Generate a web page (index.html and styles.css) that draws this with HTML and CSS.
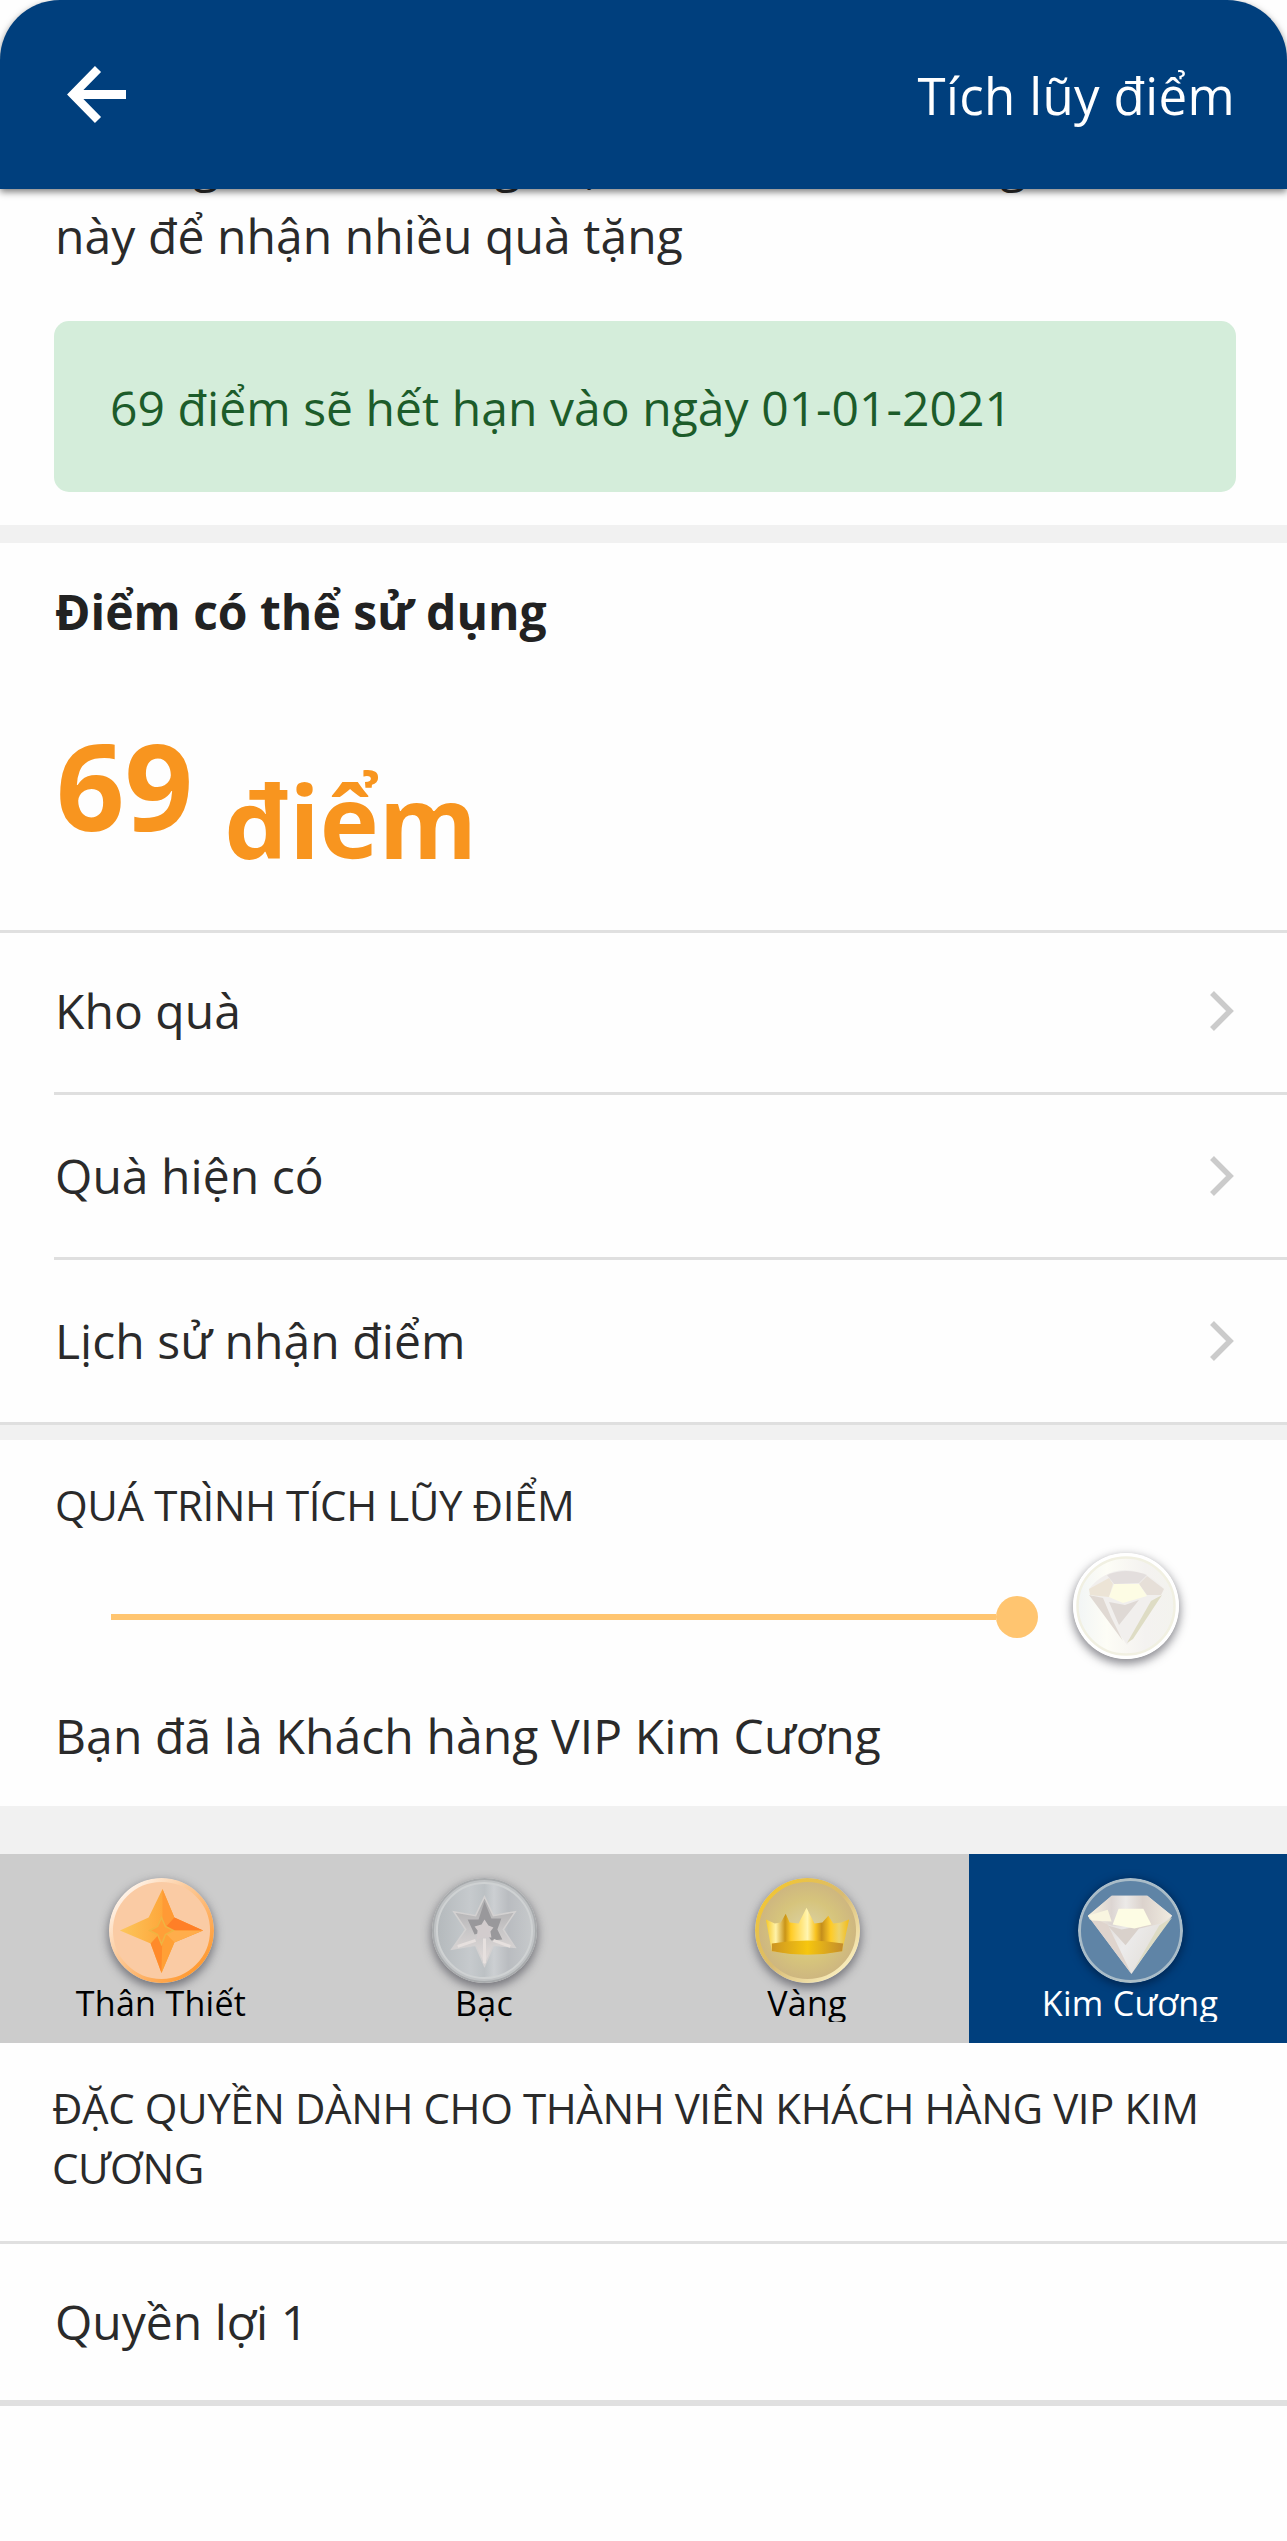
FILE: index.html
```html
<!DOCTYPE html>
<html lang="vi">
<head>
<meta charset="utf-8">
<title>Tích lũy điểm</title>
<link rel="stylesheet" href="styles.css">
</head>
<body>
<svg class="defs" width="0" height="0" aria-hidden="true">
  <defs>
    <linearGradient id="bronze-rim" x1="0" y1="0" x2="1" y2="1">
      <stop offset=".12" stop-color="#fff4ea"/><stop offset=".4" stop-color="#fccb9c"/><stop offset=".85" stop-color="#ff9c36"/>
    </linearGradient>
    <linearGradient id="bronze-left" x1="0" y1="0" x2="1" y2="0">
      <stop offset="0" stop-color="#fcc65c"/><stop offset="1" stop-color="#ff8a1c"/>
    </linearGradient>
    <linearGradient id="silver-face" x1="0" y1="0" x2="1" y2="0">
      <stop offset="0" stop-color="#b4b9bc"/><stop offset=".35" stop-color="#c6cacd"/><stop offset=".5" stop-color="#bcc1c4"/><stop offset=".6" stop-color="#cccfd2"/><stop offset=".75" stop-color="#b9bcc0"/><stop offset="1" stop-color="#c6c9cb"/>
    </linearGradient>
    <linearGradient id="silver-star" x1="0" y1="0" x2="0" y2="1">
      <stop offset="0" stop-color="#a9a9ab"/><stop offset=".5" stop-color="#c9c7c8"/><stop offset="1" stop-color="#e6dfdd"/>
    </linearGradient>
    <radialGradient id="gold-face">
      <stop offset="0" stop-color="#dcd3a8"/><stop offset=".6" stop-color="#d6c47c"/><stop offset="1" stop-color="#cdb580"/>
    </radialGradient>
    <linearGradient id="gold-rim" x1="0" y1="0" x2="1" y2="1">
      <stop offset=".1" stop-color="#f3c631"/><stop offset=".5" stop-color="#d8bb72"/><stop offset=".9" stop-color="#fbf0c0"/>
    </linearGradient>
    <linearGradient id="gold-crown" x1="0" y1="0" x2="1" y2="0">
      <stop offset="0" stop-color="#f6c927"/><stop offset=".12" stop-color="#fff2a8"/><stop offset=".23" stop-color="#c99418"/><stop offset=".3" stop-color="#ffcb25"/><stop offset=".5" stop-color="#fff5b0"/><stop offset=".6" stop-color="#f8c21f"/><stop offset=".67" stop-color="#c48e1c"/><stop offset=".78" stop-color="#ffcb25"/><stop offset=".88" stop-color="#ecd36c"/><stop offset="1" stop-color="#f3bb17"/>
    </linearGradient>
    <linearGradient id="gold-band" x1="0" y1="0" x2="1" y2="0">
      <stop offset="0" stop-color="#cd9522"/><stop offset=".5" stop-color="#f6c60e"/><stop offset="1" stop-color="#c38c2c"/>
    </linearGradient>
    <linearGradient id="pearl-face" x1="0" y1="0" x2="1" y2="0">
      <stop offset="0" stop-color="#f2f5f5"/><stop offset=".3" stop-color="#fdfdf6"/><stop offset=".7" stop-color="#f4f2f0"/><stop offset="1" stop-color="#f3f3ee"/>
    </linearGradient>
    <linearGradient id="gem-top" x1="0" y1="0" x2="1" y2="0">
      <stop offset="0" stop-color="#f7f2df"/><stop offset=".28" stop-color="#dcd5d2"/><stop offset=".45" stop-color="#eceae8"/><stop offset=".65" stop-color="#dbd2cc"/><stop offset="1" stop-color="#f0ebe0"/>
    </linearGradient>
    <linearGradient id="gem-body" x1="0" y1="0" x2="1" y2=".5">
      <stop offset="0" stop-color="#d9d0c9"/><stop offset=".6" stop-color="#ecebeb"/><stop offset="1" stop-color="#e2ded8"/>
    </linearGradient>
    <g id="gem">
      <path d="M10 38 L34 18 L70 18 L95 38 L54 97 Z" fill="url(#gem-body)"/>
      <path d="M10 38 L34 18 L70 18 L95 38 L84 46 L58 52 L34 48 L12 42 Z" fill="url(#gem-top)"/>
      <path d="M10 38 L30 47 L54 97 Z" fill="#dfd4cd"/>
      <path d="M30 48 L44 52 L64 48 L48 68 Z" fill="#d9d1cb"/>
      <path d="M95 40 L82 48 L56 93 Z" fill="#dddbc4"/>
      <path d="M41 31 L66 31 L74 47 L57 51 L35 47 Z" fill="#fdfce4"/>
      <path d="M10 38 L30 32 L34 44 L14 43 Z" fill="#f9f5e0"/>
    </g>
    <g id="gem-pale">
      <path d="M16 36 Q30 18 52 17 Q76 18 91 36 L54 92 Z" fill="#f1efed"/>
      <path d="M34 22 Q53 14 74 22 L66 30 L41 31 Z" fill="#e3dedd"/>
      <path d="M16 36 L36 25 L40 31 L36 44 L17 42 Z" fill="#ece4d6"/>
      <path d="M91 36 L74 23 L66 31 L74 42 L88 42 Z" fill="#e6dfd8"/>
      <path d="M16 42 L30 45 L38 64 L50 88 Z" fill="#e0d9d3"/>
      <path d="M36 49 L52 52 L66 47 L46 72 Z" fill="#dfd9d5"/>
      <path d="M89 42 L78 48 L54 90 L60 86 Z" fill="#dedcc4"/>
      <path d="M41 31 L66 31 L74 43 L50 50 L36 44 Z" fill="#fdfce4"/>
    </g>
  </defs>
</svg>
<div class="screen">
  <header class="topbar">
    <svg class="back" width="60" height="58" viewBox="0 0 60 58" fill="none" stroke="#fff"><path d="M59 28.5H6" stroke-width="9"/><path d="M31 3 L6 28.5 L31 54" stroke-width="8.5"/></svg>
    <h1 class="topbar-title">Tích lũy điểm</h1>
  </header>

  <section class="intro">
    <p class="intro-text"><span class="intro-cut">Tham gia các chương</span> trọn năm <span class="intro-rest">điểm trong</span><br>này để nhận nhiều quà tặng</p>
    <div class="alert">69 điểm sẽ hết hạn vào ngày 01-01-2021</div>
  </section>

  <section class="balance">
    <h2 class="balance-title">Điểm có thể sử dụng</h2>
    <div class="balance-value"><span class="number">69</span><span class="unit">điểm</span></div>
  </section>

  <nav class="links">
    <a class="link"><span>Kho quà</span><svg class="chevron" width="26" height="42" viewBox="0 0 26 42"><path d="M2 3 L20 21 L2 39"/></svg></a>
    <a class="link"><span>Quà hiện có</span><svg class="chevron" width="26" height="42" viewBox="0 0 26 42"><path d="M2 3 L20 21 L2 39"/></svg></a>
    <a class="link"><span>Lịch sử nhận điểm</span><svg class="chevron" width="26" height="42" viewBox="0 0 26 42"><path d="M2 3 L20 21 L2 39"/></svg></a>
  </nav>

  <section class="progress">
    <h3 class="caption">QUÁ TRÌNH TÍCH LŨY ĐIỂM</h3>
    <div class="progress-row">
      <div class="track"><span class="track-line"></span><span class="track-dot"></span></div>
      <svg class="coin" viewBox="0 0 106 106">
        <circle cx="53" cy="53" r="53" fill="#fff"/>
        <circle cx="53" cy="53" r="48.5" fill="url(#pearl-face)" stroke="#f1f0e2" stroke-width="2.5"/>
        <use href="#gem-pale"/>
      </svg>
    </div>
    <p class="status">Bạn đã là Khách hàng VIP Kim Cương</p>
  </section>

  <div class="tabs">
    <div class="tab">
      <svg class="coin" viewBox="0 0 106 106">
        <circle cx="53" cy="53" r="51" fill="#facba4" stroke="url(#bronze-rim)" stroke-width="4"/>
        <path d="M54 11 L66 40 L95 53 L66 65 L53 96 L42 66 L11 53 L40 40 Z" fill="url(#bronze-left)"/>
        <path d="M54 11 L66 40 L54 53 Z" fill="#ff9a35"/>
        <path d="M66 40 L95 53 L54 53 Z" fill="#ff7f27"/>
        <path d="M95 53 L66 65 L54 53 Z" fill="#ffad4b"/>
        <path d="M66 65 L53 96 L54 53 Z" fill="#ffa036"/>
        <path d="M53 96 L42 66 L54 53 Z" fill="#ff8a2a"/>
        <path d="M53 40 L57 49 L65 53 L57 57 L53 67 L49 57 L41 53 L49 49 Z" fill="#ff9f38" stroke="#efb442" stroke-width="1.5"/>
      </svg>
      <span class="tab-label">Thân Thiết</span>
    </div>
    <div class="tab">
      <svg class="coin" viewBox="0 0 106 106">
        <circle cx="53" cy="53" r="52" fill="#c0c3c5" stroke="#a8abad" stroke-width="2"/>
        <circle cx="53" cy="53" r="48" fill="url(#silver-face)" stroke="#cfd2d3" stroke-width="2"/>
        <path d="M53 19 L62 38 L84 34 L72 52 L84 70 L62 68 L53 89 L44 68 L20 72 L34 52 L22 34 L44 38 Z" fill="url(#silver-star)" stroke="#d3d1d1" stroke-width="1.5"/>
        <path d="M53 24 L60 41 L70 41 L66 52 L71 62 L60 63 L53 54 L43 57 L36 42 L47 42 Z" fill="#99989b"/>
        <path d="M53 42 L57 48 L62 50 L59 54 L60 60 L53 60 L45 62 L46 53 L43 49 L50 47 Z" fill="#d2cccd"/>
        <path d="M53 61 L53 86 M62 63 L79 69 M44 63 L26 69" stroke="#e6e0de" stroke-width="3"/>
      </svg>
      <span class="tab-label">Bạc</span>
    </div>
    <div class="tab">
      <svg class="coin" viewBox="0 0 106 106">
        <circle cx="53" cy="53" r="51" fill="url(#gold-face)" stroke="url(#gold-rim)" stroke-width="4"/>
        <path d="M11 42 L20 46 L26 45 L31 36 L35 45 L44 46 L52 30 L60 46 L68 45 L74 38 L79 46 L87 45 L95 42 L88 74 Q53 80 17 74 Z" fill="url(#gold-crown)"/>
        <path d="M17 66 Q53 60 89 66 L88 74 Q53 81 17 74 Z" fill="url(#gold-band)"/>
      </svg>
      <span class="tab-label clipped">Vàng</span>
    </div>
    <div class="tab active">
      <svg class="coin" viewBox="0 0 106 106">
        <circle cx="53" cy="53" r="51.5" fill="#5f84a6" stroke="#a9bcc8" stroke-width="3"/>
        <use href="#gem"/>
      </svg>
      <span class="tab-label clipped">Kim Cương</span>
    </div>
  </div>

  <section class="perks">
    <h3 class="caption perks-title">ĐẶC QUYỀN DÀNH CHO THÀNH VIÊN KHÁCH HÀNG VIP KIM CƯƠNG</h3>
    <div class="perk">Quyền lợi 1</div>
  </section>
</div>
</body>
</html>
```
FILE: styles.css
```css
* { box-sizing: border-box; }
body { margin: 0; background: #fefefe; font-family: "Open Sans", "Noto Sans", sans-serif; font-size: 48px; line-height: 72px; color: #2a2a2a; }
h1, h2, h3, p { margin: 0; font-weight: 400; }
.defs { display: block; }
.screen { width: 1287px; height: 2541px; overflow: hidden; background: #fefefe; }

.topbar { position: relative; z-index: 1; height: 189px; padding: 0 52px 0 67px; display: flex; align-items: center; justify-content: space-between; background: #003f7d; color: #fff; border-radius: 60px 60px 0 0; box-shadow: 0 3px 7px rgba(0, 0, 0, .5); }
.topbar-title { font-size: 51px; letter-spacing: .35px; }

.intro { display: flow-root; height: 336px; padding: 0 51px 0 54px; }
.intro-text { margin-top: -61px; padding-left: 1px; letter-spacing: .07px; white-space: nowrap; }
.intro-cut { letter-spacing: -.3px; margin-right: 5px; }
.intro-rest { margin-left: 20px; }
.alert { margin-top: 49px; height: 171px; padding: 2px 0 0 56px; display: flex; align-items: center; background: #d4edda; color: #1c5c2a; border-radius: 15px; letter-spacing: .05px; }

.balance { height: 408px; padding: 33px 54px 0 55px; border-top: 18px solid #f1f1f1; border-bottom: 3px solid #e0e0e0; color: #222; }
.balance-title { font-size: 48px; font-weight: 700; }
.balance-value { display: flex; align-items: flex-start; gap: 31px; margin-top: 77px; padding-left: 1px; color: #f8951f; font-weight: 700; }
.number { font-size: 120px; line-height: 120px; }
.unit { font-size: 100px; line-height: 100px; margin-top: 45px; }

.links { border-bottom: 3px solid #dfdfdf; padding-left: 54px; }
.link { display: flex; align-items: center; justify-content: space-between; height: 165px; padding: 0 51px 0 1px; border-bottom: 3px solid #dfdfdf; letter-spacing: .05px; }
.link:first-child { height: 162px; padding-bottom: 3px; }
.link:last-child { height: 162px; border-bottom: 0; }
.chevron { fill: none; stroke: #cbcbcb; stroke-width: 5.5; }

.caption { font-size: 42px; line-height: 60px; letter-spacing: -.4px; }
.progress { height: 381px; border-top: 15px solid #f1f1f1; padding: 35px 55px 0; }
.progress-row { display: flex; margin-top: 18px; padding-left: 56px; }
.track { display: flex; align-items: center; width: 927px; height: 42px; margin: 43px 35px 0 0; }
.track-line { flex: 1; height: 6px; background: #ffc570; }
.track-dot { width: 42px; height: 42px; border-radius: 50%; background: #ffc570; }
.coin { flex: none; width: 106px; height: 106px; border-radius: 50%; box-shadow: 0 4px 10px 1px rgba(50, 50, 60, .55); }
.status { margin-top: 41px; letter-spacing: .1px; }

.tabs { display: flex; height: 237px; border-top: 48px solid #f1f1f1; overflow: hidden; background: #ccc; }
.tab { flex: none; width: 323px; display: flex; flex-direction: column; align-items: center; padding: 24px 1px 0 0; color: #000; }
.tab .coin { width: 105px; height: 105px; }
.tab.active { background: #003f7d; color: #fff; }
.tab.active .coin { box-shadow: 0 2px 9px 1px rgba(0, 20, 50, .6); }
.tab-label { height: 39px; font-size: 34px; line-height: 40px; letter-spacing: .3px; }
.tab-label.clipped { overflow: hidden; }

.perks-title { height: 201px; padding: 35px 60px 0 52px; border-bottom: 3px solid #e0e0e0; }
.perk { height: 162px; padding-left: 55px; display: flex; align-items: center; border-bottom: 6px solid #e0e0e0; }
```
